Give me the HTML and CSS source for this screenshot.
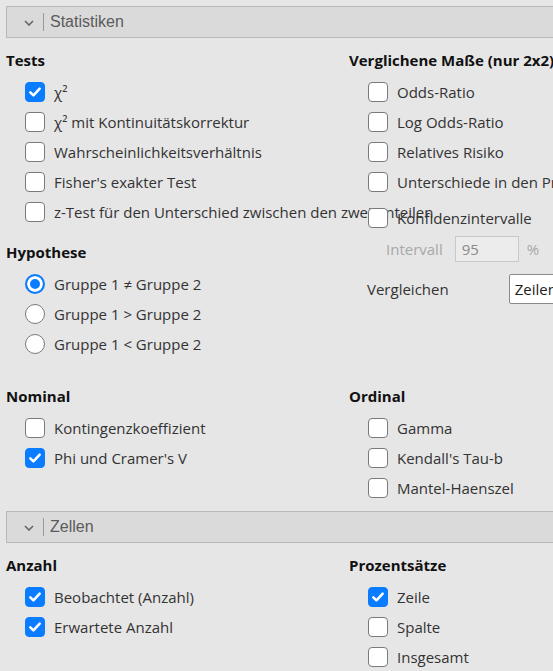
FILE: index.html
```html
<!DOCTYPE html>
<html lang="de">
<head>
<meta charset="utf-8">
<title>Statistiken</title>
<link rel="stylesheet" href="styles.css">
</head>
<body>
<div class="panel">
  <section class="section">
    <div class="sec-head">
      <svg class="chev" width="10" height="6" viewBox="0 0 10 6"><path d="M1 1 L5 5 L9 1" fill="none" stroke="#666" stroke-width="1.6"/></svg>
      <span class="sep"></span>
      <span class="sec-title">Statistiken</span>
    </div>
    <div class="sec-body">
      <div class="grid">
        <div class="col">
          <div class="group">
            <div class="heading">Tests</div>
            <label class="item"><span class="cb on"><svg viewBox="0 0 20 20"><path d="M4.8 10.3 L8.3 13.8 L15.2 6.3"/></svg></span><span class="lbl">χ²</span></label>
            <label class="item"><span class="cb"></span><span class="lbl">χ² mit Kontinuitätskorrektur</span></label>
            <label class="item"><span class="cb"></span><span class="lbl">Wahrscheinlichkeitsverhältnis</span></label>
            <label class="item"><span class="cb"></span><span class="lbl">Fisher's exakter Test</span></label>
            <label class="item"><span class="cb"></span><span class="lbl">z-Test für den Unterschied zwischen den zwei Anteilen</span></label>
          </div>
          <div class="group g-hyp">
            <div class="heading">Hypothese</div>
            <label class="item"><span class="rb on"></span><span class="lbl">Gruppe 1 ≠ Gruppe 2</span></label>
            <label class="item"><span class="rb"></span><span class="lbl">Gruppe 1 &gt; Gruppe 2</span></label>
            <label class="item"><span class="rb"></span><span class="lbl">Gruppe 1 &lt; Gruppe 2</span></label>
          </div>
        </div>
        <div class="col">
          <div class="group">
            <div class="heading">Verglichene Maße (nur 2x2)</div>
            <label class="item"><span class="cb"></span><span class="lbl">Odds-Ratio</span></label>
            <label class="item"><span class="cb"></span><span class="lbl">Log Odds-Ratio</span></label>
            <label class="item"><span class="cb"></span><span class="lbl">Relatives Risiko</span></label>
            <label class="item"><span class="cb"></span><span class="lbl">Unterschiede in den Proportionen</span></label>
            <label class="item item-ci"><span class="cb"></span><span class="lbl">Konfidenzintervalle</span></label>
            <div class="sub-row">
              <span class="dim">Intervall</span>
              <span class="num">95</span>
              <span class="dim">%</span>
            </div>
            <div class="cmp-row">
              <span class="lbl">Vergleichen</span>
              <span class="select">Zeilen</span>
            </div>
          </div>
        </div>
        <div class="col row2">
          <div class="group">
            <div class="heading">Nominal</div>
            <label class="item"><span class="cb"></span><span class="lbl">Kontingenzkoeffizient</span></label>
            <label class="item"><span class="cb on"><svg viewBox="0 0 20 20"><path d="M4.8 10.3 L8.3 13.8 L15.2 6.3"/></svg></span><span class="lbl">Phi und Cramer's V</span></label>
          </div>
        </div>
        <div class="col row2">
          <div class="group">
            <div class="heading">Ordinal</div>
            <label class="item"><span class="cb"></span><span class="lbl">Gamma</span></label>
            <label class="item"><span class="cb"></span><span class="lbl">Kendall's Tau-b</span></label>
            <label class="item"><span class="cb"></span><span class="lbl">Mantel-Haenszel</span></label>
          </div>
        </div>
      </div>
    </div>
  </section>
  <section class="section sec2">
    <div class="sec-head">
      <svg class="chev" width="10" height="6" viewBox="0 0 10 6"><path d="M1 1 L5 5 L9 1" fill="none" stroke="#666" stroke-width="1.6"/></svg>
      <span class="sep"></span>
      <span class="sec-title">Zellen</span>
    </div>
    <div class="sec-body">
      <div class="grid">
        <div class="col">
          <div class="group">
            <div class="heading">Anzahl</div>
            <label class="item"><span class="cb on"><svg viewBox="0 0 20 20"><path d="M4.8 10.3 L8.3 13.8 L15.2 6.3"/></svg></span><span class="lbl">Beobachtet (Anzahl)</span></label>
            <label class="item"><span class="cb on"><svg viewBox="0 0 20 20"><path d="M4.8 10.3 L8.3 13.8 L15.2 6.3"/></svg></span><span class="lbl">Erwartete Anzahl</span></label>
          </div>
        </div>
        <div class="col">
          <div class="group">
            <div class="heading">Prozentsätze</div>
            <label class="item"><span class="cb on"><svg viewBox="0 0 20 20"><path d="M4.8 10.3 L8.3 13.8 L15.2 6.3"/></svg></span><span class="lbl">Zeile</span></label>
            <label class="item"><span class="cb"></span><span class="lbl">Spalte</span></label>
            <label class="item"><span class="cb"></span><span class="lbl">Insgesamt</span></label>
          </div>
        </div>
      </div>
    </div>
  </section>
</div>
</body>
</html>
```

FILE: styles.css
```css
html, body {
  margin: 0;
  padding: 0;
  overflow: hidden;
  background: #e6e6e6;
}
body {
  font-family: "Open Sans", "Noto Sans", sans-serif;
  font-size: 15px;
  color: #333;
}
.panel {
  width: 640px;
  padding: 6px 0 0 6px;
}
.sec-head {
  height: 30px;
  border: 1px solid #b9b9b9;
  background: #dadada;
  display: flex;
  align-items: center;
}
.chev {
  margin-left: 17px;
  margin-top: 1px;
}
.sep {
  width: 1px;
  height: 18px;
  background: #999;
  margin-left: 9px;
}
.sec-title {
  font-family: "Liberation Sans", Arial, sans-serif;
  font-size: 16px;
  color: #5a5a5a;
  margin-left: 6px;
}
.sec-body {
  padding-top: 12px;
}
.sec2 {
  margin-top: 8px;
}
.sec2 .sec-body {
  padding-top: 12px;
}
.grid {
  display: grid;
  grid-template-columns: 343px 1fr;
}
.row2 {
  margin-top: 27px;
}
.group {
  display: flex;
  flex-direction: column;
}
.g-hyp {
  margin-top: 15px;
}
.heading {
  font-weight: 700;
  color: #111;
  line-height: 20px;
  margin-bottom: 7px;
  white-space: nowrap;
}
.item {
  display: flex;
  align-items: center;
  height: 30px;
  padding-left: 19px;
  white-space: nowrap;
}
.item-ci {
  margin-top: 6px;
}
.cb, .rb {
  flex: none;
  width: 18px;
  height: 18px;
  border: 1px solid #7a7a7a;
  background: #fff;
  border-radius: 4px;
  margin-right: 9px;
  display: flex;
}
.cb.on {
  background: #0a7cff;
  border-color: #0a7cff;
}
.cb svg {
  width: 18px;
  height: 18px;
}
.cb svg path {
  fill: none;
  stroke: #fff;
  stroke-width: 2.8;
  stroke-linecap: round;
  stroke-linejoin: round;
}
.rb {
  border-radius: 50%;
}
.rb.on {
  width: 16px;
  height: 16px;
  border: 2px solid #0a7cff;
  background: #0a7cff;
  box-shadow: inset 0 0 0 3px #fff;
}
.lbl {
  color: #333;
}
.sub-row {
  display: flex;
  align-items: center;
  margin-top: 3px;
  padding-left: 37px;
  height: 26px;
}
.dim {
  color: #a8a8a8;
}
.num {
  width: 56px;
  height: 24px;
  border: 1px solid #c9c9c9;
  background: #ececec;
  color: #8a8a8a;
  margin: 0 8px 0 12px;
  padding-left: 6px;
  line-height: 24px;
}
.cmp-row {
  display: flex;
  align-items: center;
  margin-top: 12px;
  padding-left: 18px;
  height: 30px;
}
.select {
  margin-left: 60px;
  height: 28px;
  width: 120px;
  border: 1px solid #8a8a8a;
  border-radius: 2px;
  background: #fff;
  padding-left: 5px;
  line-height: 28px;
  color: #222;
}
```
